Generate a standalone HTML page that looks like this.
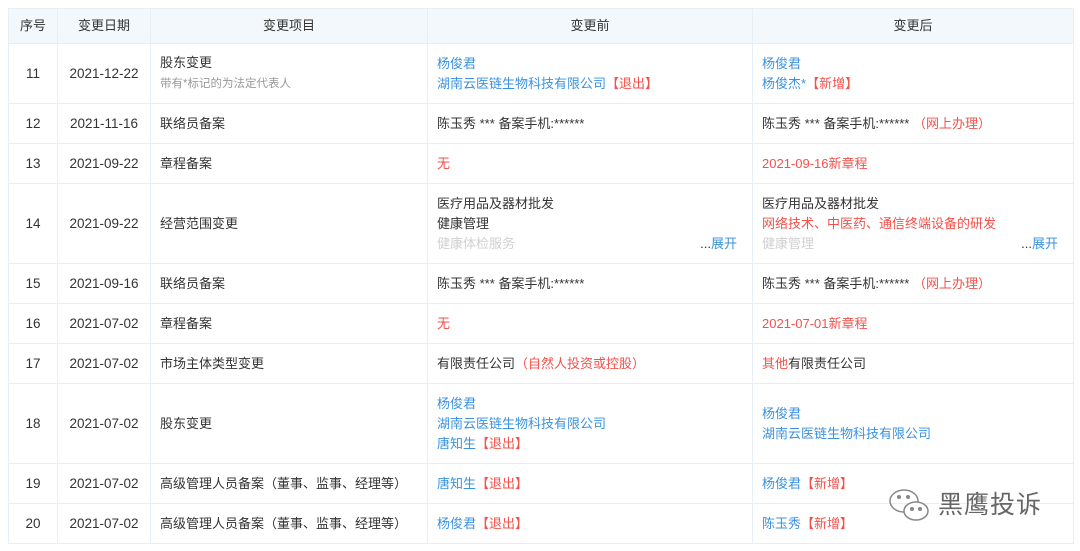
<!DOCTYPE html>
<html><head><meta charset="utf-8"><style>
body{margin:0;background:#fff;width:1080px;height:551px;overflow:hidden;font-family:"Liberation Sans","Noto Sans CJK SC",sans-serif;font-size:13px;color:#333}
table{position:absolute;left:8px;top:8px;border-collapse:collapse;table-layout:fixed;width:1065px}
td,th{border:1px solid #e6eef6;padding:0 9px;line-height:20px;vertical-align:middle}
th{background:#f2f8fc;font-weight:normal;height:34px;text-align:center}
td.c{text-align:center;padding:0;font-size:13.5px}
.b{color:#3a92e0}.r{color:#f5504a}.g{color:#999;font-size:11.5px}
.fade{color:#d0d0d0}
.more{position:relative;padding-right:6px}
.more span.x{position:absolute;right:6px;bottom:0}
.wm{position:absolute;left:888px;top:484px;color:#666;font-size:25px;letter-spacing:1px}
</style></head><body>
<table>
<colgroup><col style="width:49px"><col style="width:93px"><col style="width:277px"><col style="width:325px"><col style="width:321px"></colgroup>
<tr><th>序号</th><th>变更日期</th><th>变更项目</th><th>变更前</th><th>变更后</th></tr>
<tr style="height:60px"><td class="c">11</td><td class="c">2021-12-22</td><td>股东变更<br><span class="g">带有*标记的为法定代表人</span></td><td><span class="b">杨俊君</span><br><span class="b">湖南云医链生物科技有限公司</span><span class="r">【退出】</span></td><td><span class="b">杨俊君</span><br><span class="b">杨俊杰*</span><span class="r">【新增】</span></td></tr>
<tr style="height:40px"><td class="c">12</td><td class="c">2021-11-16</td><td>联络员备案</td><td>陈玉秀 *** 备案手机:******</td><td>陈玉秀 *** 备案手机:****** <span class="r">（网上办理）</span></td></tr>
<tr style="height:40px"><td class="c">13</td><td class="c">2021-09-22</td><td>章程备案</td><td class="r">无</td><td class="r">2021-09-16新章程</td></tr>
<tr style="height:80px"><td class="c">14</td><td class="c">2021-09-22</td><td>经营范围变更</td><td><div class="more">医疗用品及器材批发<br>健康管理<br><span class="fade">健康体检服务</span><span class="x">...<span class="b">展开</span></span></div></td><td><div class="more">医疗用品及器材批发<br><span class="r">网络技术、中医药、通信终端设备的研发</span><br><span class="fade">健康管理</span><span class="x">...<span class="b">展开</span></span></div></td></tr>
<tr style="height:40px"><td class="c">15</td><td class="c">2021-09-16</td><td>联络员备案</td><td>陈玉秀 *** 备案手机:******</td><td>陈玉秀 *** 备案手机:****** <span class="r">（网上办理）</span></td></tr>
<tr style="height:40px"><td class="c">16</td><td class="c">2021-07-02</td><td>章程备案</td><td class="r">无</td><td class="r">2021-07-01新章程</td></tr>
<tr style="height:40px"><td class="c">17</td><td class="c">2021-07-02</td><td>市场主体类型变更</td><td>有限责任公司<span class="r">（自然人投资或控股）</span></td><td><span class="r">其他</span>有限责任公司</td></tr>
<tr style="height:80px"><td class="c">18</td><td class="c">2021-07-02</td><td>股东变更</td><td><span class="b">杨俊君</span><br><span class="b">湖南云医链生物科技有限公司</span><br><span class="b">唐知生</span><span class="r">【退出】</span></td><td><span class="b">杨俊君</span><br><span class="b">湖南云医链生物科技有限公司</span></td></tr>
<tr style="height:40px"><td class="c">19</td><td class="c">2021-07-02</td><td>高级管理人员备案（董事、监事、经理等）</td><td><span class="b">唐知生</span><span class="r">【退出】</span></td><td><span class="b">杨俊君</span><span class="r">【新增】</span></td></tr>
<tr style="height:40px"><td class="c">20</td><td class="c">2021-07-02</td><td>高级管理人员备案（董事、监事、经理等）</td><td><span class="b">杨俊君</span><span class="r">【退出】</span></td><td><span class="b">陈玉秀</span><span class="r">【新增】</span></td></tr>
</table>
<svg style="position:absolute;left:886px;top:487px" width="48" height="36" viewBox="0 0 48 36" fill="none" stroke="#888" stroke-width="1.5"><ellipse cx="18" cy="14" rx="14" ry="11"/><ellipse cx="30" cy="24" rx="12" ry="9" fill="#fff"/><circle cx="13" cy="10" r="1.3" fill="#888"/><circle cx="22" cy="10" r="1.3" fill="#888"/><circle cx="26" cy="22" r="1.3" fill="#888"/><circle cx="34" cy="22" r="1.3" fill="#888"/></svg>
<div class="wm" style="left:938px;top:485px">黑鹰投诉</div>
</body></html>
